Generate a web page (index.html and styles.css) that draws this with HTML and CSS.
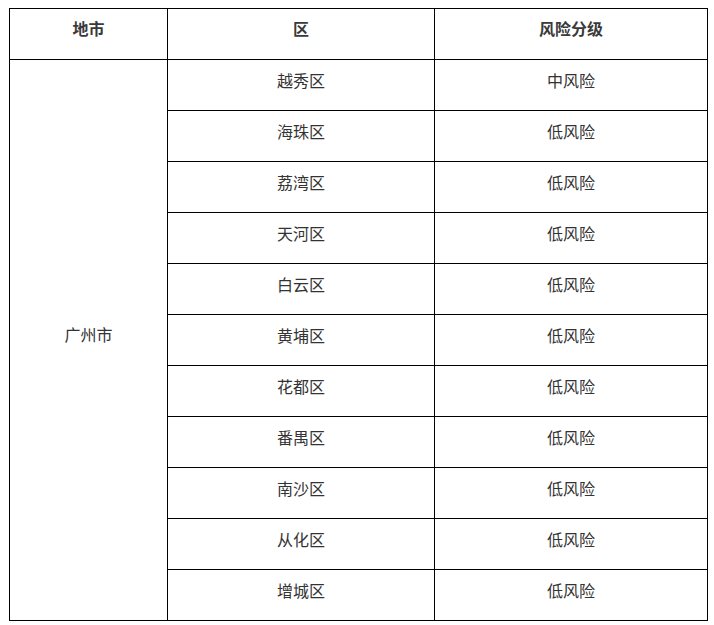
FILE: index.html
```html
<!DOCTYPE html>
<html lang="zh-CN">
<head>
<meta charset="utf-8">
<link rel="stylesheet" href="styles.css">
</head>
<body>
<table class="risk">
  <colgroup>
    <col class="c1"><col class="c2"><col class="c3">
  </colgroup>
  <thead>
    <tr><th>地市</th><th>区</th><th>风险分级</th></tr>
  </thead>
  <tbody>
    <tr><td rowspan="11" class="city">广州市</td><td>越秀区</td><td>中风险</td></tr>
    <tr><td>海珠区</td><td>低风险</td></tr>
    <tr><td>荔湾区</td><td>低风险</td></tr>
    <tr><td>天河区</td><td>低风险</td></tr>
    <tr><td>白云区</td><td>低风险</td></tr>
    <tr><td>黄埔区</td><td>低风险</td></tr>
    <tr><td>花都区</td><td>低风险</td></tr>
    <tr><td>番禺区</td><td>低风险</td></tr>
    <tr><td>南沙区</td><td>低风险</td></tr>
    <tr><td>从化区</td><td>低风险</td></tr>
    <tr><td>增城区</td><td>低风险</td></tr>
  </tbody>
</table>
</body>
</html>
```
FILE: styles.css
```css
html, body {
  margin: 0;
  padding: 0;
  background: #fff;
}
body {
  padding: 8px 0 0 9px;
  font-family: "Noto Sans CJK SC", "Noto Sans", sans-serif;
  font-size: 16px;
  color: #333;
}
.risk {
  border-collapse: collapse;
  table-layout: fixed;
  width: 698px;
}
.c1 { width: 158px; }
.c2 { width: 267px; }
.c3 { width: 273px; }
.risk th,
.risk td {
  border: 1px solid #000;
  height: 51px;
  padding: 0 0 11px 0;
  box-sizing: border-box;
  text-align: center;
  vertical-align: middle;
  line-height: 20px;
}
.risk th {
  font-weight: bold;
  color: #3a3a3a;
  padding-bottom: 13px;
}
.risk td.city {
  padding-bottom: 12px;
}
```
